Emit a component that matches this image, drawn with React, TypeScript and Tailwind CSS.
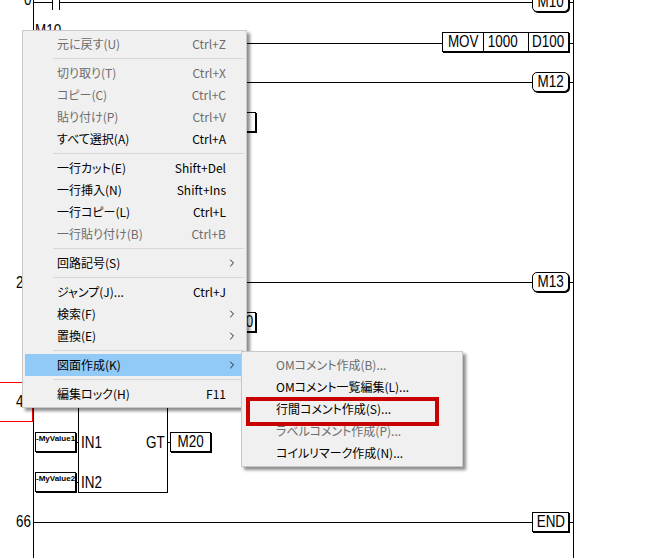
import { ChevronRight } from "lucide-react";

type Item = { label?: string; keys?: string; off?: boolean; arrow?: boolean; active?: boolean };

const menuItems: Item[] = [
  { label: "元に戻す(U)", keys: "Ctrl+Z", off: true },
  {},
  { label: "切り取り(T)", keys: "Ctrl+X", off: true },
  { label: "コピー(C)", keys: "Ctrl+C", off: true },
  { label: "貼り付け(P)", keys: "Ctrl+V", off: true },
  { label: "すべて選択(A)", keys: "Ctrl+A" },
  {},
  { label: "一行カット(E)", keys: "Shift+Del" },
  { label: "一行挿入(N)", keys: "Shift+Ins" },
  { label: "一行コピー(L)", keys: "Ctrl+L" },
  { label: "一行貼り付け(B)", keys: "Ctrl+B", off: true },
  {},
  { label: "回路記号(S)", arrow: true },
  {},
  { label: "ジャンプ(J)...", keys: "Ctrl+J" },
  { label: "検索(F)", arrow: true },
  { label: "置換(E)", arrow: true },
  {},
  { label: "図面作成(K)", arrow: true, active: true },
  {},
  { label: "編集ロック(H)", keys: "F11" },
];

const subItems: Item[] = [
  { label: "OMコメント作成(B)...", off: true },
  { label: "OMコメント一覧編集(L)..." },
  { label: "行間コメント作成(S)..." },
  { label: "ラベルコメント作成(P)...", off: true },
  { label: "コイルリマーク作成(N)..." },
];

function MenuRow({ item }: { item: Item }) {
  if (!item.label) {
    return (
      <div className="flex h-[7px] items-center pl-[28px]">
        <div className="h-px w-full bg-[#d7d7d7]" />
      </div>
    );
  }
  return (
    <div className={`flex h-[22px] items-center justify-between pb-px pl-[32px] pr-[6px] ${item.active ? "bg-[#91c9f7]" : ""} ${item.off ? "text-[#6d6d6d]" : "text-black"}`}>
      <span className="[font-feature-settings:'palt']">{item.label}</span>
      {item.keys && <span className="pr-[12px]">{item.keys}</span>}
      {item.arrow && <ChevronRight className="size-[12px] text-[#222]" strokeWidth={2} />}
    </div>
  );
}

// the plc font is a tall narrow bitmap one, so squeeze the text sideways
function Narrow({ text }: { text: string }) {
  return <span className="inline-block scale-x-[0.84] text-[16px] whitespace-nowrap">{text}</span>;
}

function Line({ x, y, w, h, red }: { x: number; y: number; w?: number; h?: number; red?: boolean }) {
  return <div className={`absolute ${red ? "bg-[#ff0000]" : "bg-black"}`} style={{ left: x, top: y, width: w ?? 1, height: h ?? 1 }} />;
}

function Box({ x, y, w, text, round, small }: { x: number; y: number; w: number; text: string; round?: boolean; small?: boolean }) {
  return (
    <div
      className={`absolute flex h-[20px] overflow-hidden border border-black bg-white shadow-[1px_1px_0_#000] ${round ? "rounded-[5px]" : ""} ${small ? "justify-start pt-px text-[8px] leading-[10px] font-bold whitespace-nowrap" : "items-center justify-center"}`}
      style={{ left: x, top: y, width: w }}
    >
      {small ? text : <Narrow text={text} />}
    </div>
  );
}

function Label({ x, y, text }: { x: number; y: number; text: string }) {
  return (
    <span className="absolute origin-left scale-x-[0.84] text-[16px] leading-[18px]" style={{ left: x, top: y }}>
      {text}
    </span>
  );
}

export default function App() {
  return (
    <div className="relative h-[558px] w-[646px] overflow-hidden bg-white font-['Liberation_Sans',sans-serif] text-black">
      <Line x={33} y={0} h={558} />
      <Line x={573} y={0} h={558} />

      <Label x={24} y={-9} text="0" />
      <Line x={33} y={2} w={19} />
      <Line x={52} y={0} h={10} />
      <Line x={59} y={0} h={10} />
      <Line x={59} y={2} w={474} />
      <Box x={532} y={-8} w={37} text="M10" round />
      <Line x={570} y={2} w={3} />

      <Label x={35} y={22} text="M10" />
      <Line x={247} y={43} w={196} />
      <div className="absolute left-[442px] top-[32px] flex h-[20px] w-[127px] border border-black bg-white shadow-[1px_1px_0_#000]">
        <div className="flex w-[41px] items-center justify-center border-r border-black">
          <Narrow text="MOV" />
        </div>
        <div className="flex w-[45px] items-center justify-center border-r border-black pr-[7px]">
          <Narrow text="1000" />
        </div>
        <div className="flex flex-1 items-center justify-center">
          <Narrow text="D100" />
        </div>
      </div>
      <Line x={570} y={43} w={3} />

      <Line x={247} y={82} w={286} />
      <Box x={532} y={72} w={37} text="M12" round />
      <Line x={570} y={82} w={3} />

      <Box x={200} y={112} w={56} text="" />

      <Label x={16} y={274} text="2" />
      <Line x={247} y={282} w={286} />
      <Box x={532} y={272} w={37} text="M13" round />
      <Line x={570} y={282} w={3} />

      <div className="absolute left-[200px] top-[312px] flex h-[20px] w-[56px] items-center justify-end border border-black bg-white pr-[1px] shadow-[1px_1px_0_#000]">
        <Narrow text="0" />
      </div>

      <Line x={0} y={382} w={34} red />
      <Line x={0} y={421} w={33} red />
      <Line x={32} y={382} h={40} red />
      <Label x={16} y={393} text="4" />

      <div className="absolute left-[78px] top-[380px] h-[113px] w-[90px] border border-black" />
      <Box x={35} y={432} w={41} text="-MyValue1" small />
      <Box x={35} y={472} w={41} text="-MyValue2" small />
      <Line x={76} y={442} w={2} />
      <Line x={76} y={482} w={2} />
      <Label x={81} y={434} text="IN1" />
      <Label x={81} y={474} text="IN2" />
      <Label x={146} y={434} text="GT" />
      <Line x={167} y={442} w={3} />
      <Box x={170} y={432} w={41} text="M20" />

      <Label x={16} y={513} text="66" />
      <Line x={34} y={522} w={499} />
      <Box x={532} y={512} w={37} text="END" />
      <Line x={570} y={522} w={3} />

      <div className="absolute left-[22px] top-[30px] h-[378px] w-[225px] border border-[#c8c8c8] bg-[#f0f0f0] p-[2px] font-['Noto_Sans_CJK_JP',sans-serif] text-[12px] shadow-[3px_3px_3px_rgba(0,0,0,0.45)]">
        {menuItems.map((item, i) => (
          <MenuRow key={i} item={item} />
        ))}
      </div>

      <div className="absolute left-[241px] top-[351px] h-[116px] w-[222px] border border-[#c8c8c8] bg-[#f0f0f0] p-[2px] font-['Noto_Sans_CJK_JP',sans-serif] text-[12px] shadow-[3px_3px_3px_rgba(0,0,0,0.45)]">
        {subItems.map((item, i) => (
          <MenuRow key={i} item={item} />
        ))}
      </div>

      <div className="absolute left-[246px] top-[397px] h-[29px] w-[193px] border-[4px] border-[#c80000]" />
    </div>
  );
}
